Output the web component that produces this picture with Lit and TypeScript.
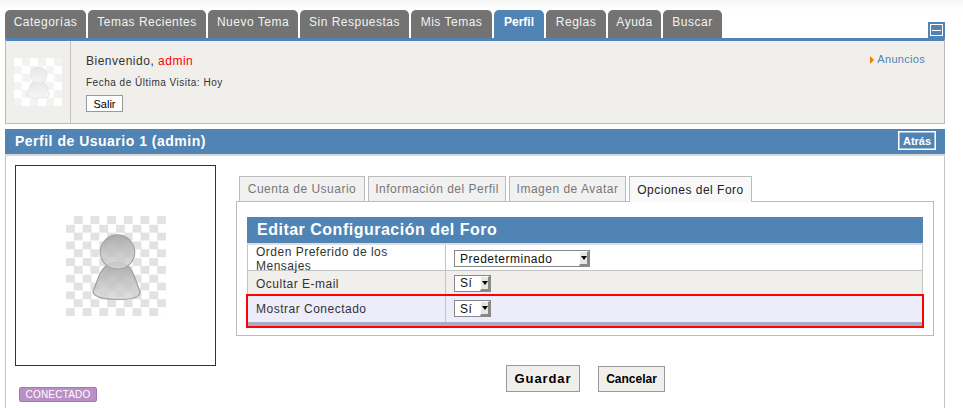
import { LitElement, html, css, svg } from "lit";
import { customElement } from "lit/decorators.js";

const person = (size: number, faded: boolean) => svg`
<svg class="person" width=${size} height=${size} viewBox="0 0 100 100" aria-hidden="true">
  <defs>
    <linearGradient id="g${size}" x1="0" y1="0" x2="0" y2="1">
      <stop offset="0" stop-color=${faded ? "#e6e6e6" : "#a8a8a8"} stop-opacity=".95"/>
      <stop offset="1" stop-color=${faded ? "#f4f4f4" : "#d8d8d8"} stop-opacity=".8"/>
    </linearGradient>
  </defs>
  <path d="M51 46C38 46 33 58 30 68C28 74 25 76 29 79C34 83 44 83.500 52 83.500C60 83.500 70 83 73 79C76 76 72 72 70 65C67 56 63 46 51 46Z"
    fill="url(#g${size})" stroke=${faded ? "#dcdcdc" : "#a0a0a0"} stroke-width="1.200"/>
  <circle cx="51.500" cy="36" r="17.200" fill="url(#g${size})" stroke=${faded ? "#dcdcdc" : "#a4a4a4"} stroke-width="1.200"/>
</svg>`;

@customElement("app-root")
export class AppRoot extends LitElement {
  static styles = css`
    :host {
      display: block;
      height: 408px;
      overflow: hidden;
      box-sizing: border-box;
      padding: 10px 18px 0 5px;
      background: linear-gradient(#f6f6f6, #fff 10px);
      font-family: "Liberation Sans", Arial, sans-serif;
      font-size: 12px;
      color: #333;
      letter-spacing: 0.5px;
    }
    * { box-sizing: border-box; }
    .nav { display: flex; height: 28px; gap: 2px; position: relative; }
    .nav a {
      display: flex; align-items: center; justify-content: center;
      background: #737373; color: #f2f2f2;
      border-radius: 5px 5px 0 0;
      padding-bottom: 4px;
    }
    .nav a.on { background: #5084b4; color: #fff; font-weight: bold; letter-spacing: 0; }
    .collapse {
      position: absolute; right: 0; top: 12px;
      width: 17px; height: 16px; background: #5084b4;
      display: flex; align-items: center; justify-content: center;
    }
    .collapse span {
      width: 13px; height: 12px; border: 1px solid #fff;
      display: flex; align-items: center; justify-content: center;
    }
    .collapse i { display: block; width: 9px; height: 1px; background: #fff; }
    .user {
      display: flex; height: 86px;
      border-top: 3px solid #5084b4;
      border-left: 1px solid #bbb; border-right: 1px solid #bbb; border-bottom: 1px solid #bbb;
      background: #f1efec;
    }
    .me {
      width: 65px; flex: none; border-right: 1px solid #c4c4c4;
      padding: 17px 0 0 8px;
    }
    .thumb {
      width: 48px; height: 48px;
      background-color: #f9f9f9;
      background-image: conic-gradient(#f3f3f3 25%, #fff 0 50%, #f3f3f3 0 75%, #fff 0);
      background-size: 16px 16px;
    }
    .thumb .person { display: block; }
    .hello { flex: 1; padding: 13px 0 0 15px; color: #333; }
    .hello b { font-weight: normal; color: #f00; }
    .hello p { margin: 0; line-height: 14px; }
    .hello .date { font-size: 10px; margin-top: 9px; line-height: 12px; }
    .salir {
      margin-top: 6px; width: 37px; height: 17px;
      display: flex; align-items: center; justify-content: center;
      background: #fff; border: 1px solid #999; color: #000;
      font-size: 11px; letter-spacing: 0;
    }
    .news {
      padding: 11px 19px 0 0; color: #5084b4; font-size: 11px; letter-spacing: 0.3px;
      display: flex; align-items: flex-start; gap: 3px; line-height: 14px;
    }
    .news i {
      display: block; margin-top: 4px; width: 0; height: 0;
      border-left: 4px solid #f08000;
      border-top: 4px solid transparent; border-bottom: 4px solid transparent;
    }
    .head {
      margin-top: 5px; height: 27px;
      background: #5084b4; color: #fff;
      border-bottom: 2px solid #d8d8d8;
      display: flex; align-items: center; justify-content: space-between;
      padding: 0 9px 2px 10px;
      font-size: 14px; font-weight: bold;
    }
    .back {
      width: 38px; height: 19px; border: 1px solid #fff; outline: 0;
      box-shadow: inset 0 0 0 .5px #fff;
      display: flex; align-items: center; justify-content: center;
      font-size: 11px; letter-spacing: 0;
    }
    .body {
      display: flex; height: 252px;
      border-left: 1px solid #c4c4c4; border-right: 1px solid #c4c4c4;
      padding: 9px 10px 0 9px;
    }
    .left { width: 221px; flex: none; }
    .avatar {
      width: 201px; height: 201px; border: 1px solid #333;
      display: flex; align-items: center; justify-content: center;
    }
    .check {
      width: 100px; height: 100px;
      background-image: conic-gradient(#e2e2e2 25%, #fff 0 50%, #e2e2e2 0 75%, #fff 0);
      background-size: 16.670px 16.670px;
    }
    .check .person { display: block; }
    .badge {
      margin: 21px 0 0 4px; width: 78px; height: 15px;
      background: #b98fc6; border: 1px solid #a578b4; border-radius: 2px;
      color: #fff; font-size: 10px; letter-spacing: 0.2px;
      display: flex; align-items: center; justify-content: center;
    }
    .right { flex: 1; padding-top: 11px; }
    .subtabs { display: flex; gap: 3px; padding-left: 3px; height: 25px; position: relative; z-index: 1; }
    .subtabs a {
      display: flex; align-items: center; justify-content: center;
      border: 1px solid #bbb; border-bottom: 0; background: #f1f1f1; color: #777;
    }
    .subtabs a.on { background: #f9f9f9; color: #222; height: 26px; }
    .panel {
      border: 1px solid #bbb; height: 135px;
      padding: 15px 10px 0;
    }
    .title {
      height: 26px; background: #5084b4; color: #fff;
      font-size: 16px; font-weight: bold; padding-left: 10px;
      display: flex; align-items: center;
    }
    .rows { border-top: 2px solid #e0e0e0; border-right: 1px solid #c4c4c4; border-left: 1px solid #c4c4c4; }
    .row { display: grid; grid-template-columns: 197px 1fr; border-bottom: 1px solid #c4c4c4; height: 26px; }
    .row.r2 { background: #f1efec; height: 25px; border-bottom: 0; }
    .row.r3 {
      background: #edecfb; height: 30px;
      border-bottom: 4px solid #aaaac4;
      outline: 2px solid #f00;
    }
    .row > div { display: flex; align-items: center; padding-left: 8px; }
    .row > div + div { border-left: 1px solid #c4c4c4; }
    .select {
      display: flex; align-items: center; justify-content: space-between;
      height: 17px; background: #fff; border: 1px solid #888;
      padding-left: 5px; color: #111; margin-bottom: 1px;
    }
    .select.wide { width: 136px; }
    .select.yes { width: 37px; }
    .arrow {
      width: 10px; height: 15px; background: #e6e6e6;
      border-right: 2px solid #888; border-bottom: 2px solid #888;
      border-left: 1px solid #fff; border-top: 1px solid #fff;
      display: flex; align-items: center; justify-content: center;
    }
    .arrow i {
      display: block; width: 0; height: 0;
      border-top: 4px solid #000;
      border-left: 3px solid transparent; border-right: 3px solid transparent;
    }
    .actions { display: flex; padding: 29px 0 0 270px; gap: 18px; align-items: flex-end; }
    .btn {
      display: flex; align-items: center; justify-content: center;
      background: #f1efec; border: 1px solid #999; color: #000;
      font-weight: bold; height: 26px;
    }
    .btn.save { width: 74px; height: 27px; font-size: 13px; letter-spacing: 0.9px; }
    .btn.cancel { width: 67px; font-size: 12px; letter-spacing: 0; }
  `;

  render() {
    const tabs: [string, number, boolean?][] = [
      ["Categorías", 81], ["Temas Recientes", 118], ["Nuevo Tema", 90], ["Sin Respuestas", 109],
      ["Mis Temas", 81], ["Perfil", 50, true], ["Reglas", 60], ["Ayuda", 53], ["Buscar", 59],
    ];
    return html`
      <nav class="nav">
        ${tabs.map(([t, w, on]) => html`<a class=${on ? "on" : ""} style="width:${w}px">${t}</a>`)}
        <div class="collapse"><span><i></i></span></div>
      </nav>
      <section class="user">
        <div class="me"><div class="thumb">${person(48, true)}</div></div>
        <div class="hello">
          <p>Bienvenido, <b>admin</b></p>
          <p class="date">Fecha de Última Visita: Hoy</p>
          <div class="salir">Salir</div>
        </div>
        <div class="news"><i></i><span>Anuncios</span></div>
      </section>
      <header class="head"><span>Perfil de Usuario 1 (admin)</span><span class="back">Atrás</span></header>
      <main class="body">
        <div class="left">
          <div class="avatar"><div class="check">${person(100, false)}</div></div>
          <div class="badge">CONECTADO</div>
        </div>
        <div class="right">
          <div class="subtabs">
            <a style="width:126px">Cuenta de Usuario</a>
            <a style="width:138px">Información del Perfil</a>
            <a style="width:117px">Imagen de Avatar</a>
            <a class="on" style="width:123px">Opciones del Foro</a>
          </div>
          <div class="panel">
            <div class="title">Editar Configuración del Foro</div>
            <div class="rows">
              <div class="row">
                <div>Orden Preferido de los Mensajes</div>
                <div><span class="select wide">Predeterminado<span class="arrow"><i></i></span></span></div>
              </div>
              <div class="row r2">
                <div>Ocultar E-mail</div>
                <div><span class="select yes">Sí<span class="arrow"><i></i></span></span></div>
              </div>
              <div class="row r3">
                <div>Mostrar Conectado</div>
                <div><span class="select yes">Sí<span class="arrow"><i></i></span></span></div>
              </div>
            </div>
          </div>
          <div class="actions">
            <div class="btn save">Guardar</div>
            <div class="btn cancel">Cancelar</div>
          </div>
        </div>
      </main>
    `;
  }
}
